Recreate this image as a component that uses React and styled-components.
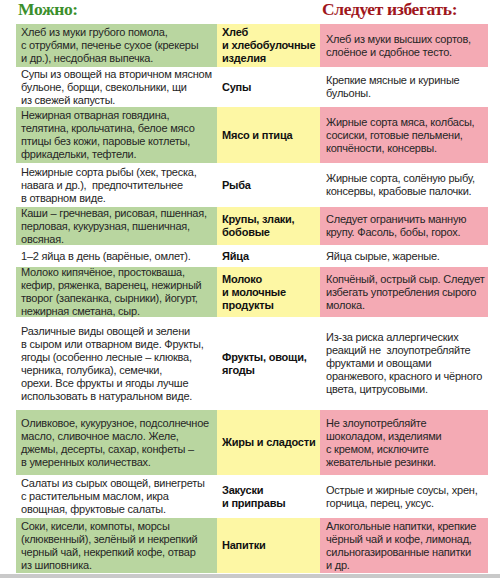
import React from 'react';
import styled, { createGlobalStyle } from 'styled-components';

const GlobalStyle = createGlobalStyle`
    html, body {
        margin: 0;
        padding: 0;
        background: #ffffff;
    }
    body {
        font-family: "Liberation Sans", Arial, sans-serif;
        color: #1e1e1e;
    }
`;

const COLS = '201px 103px 168px';

const rows = [
    {
        h: 43, tint: true,
        ok: ['Хлеб из муки грубого помола,', 'с отрубями, печенье сухое (крекеры', 'и др.), несдобная выпечка.'],
        group: ['Хлеб', 'и хлебобулочные', 'изделия'],
        no: ['Хлеб из муки высших сортов,', 'слоёное и сдобное тесто.'],
    },
    {
        h: 40,
        ok: ['Супы из овощей на вторичном мясном', 'бульоне, борщи, свекольники, щи', 'из свежей капусты.'],
        group: ['Супы'],
        no: ['Крепкие мясные и куриные', 'бульоны.'],
    },
    {
        h: 56, tint: true,
        ok: ['Нежирная отварная говядина,', 'телятина, крольчатина, белое мясо', 'птицы без кожи, паровые котлеты,', 'фрикадельки, тефтели.'],
        group: ['Мясо и птица'],
        no: ['Жирные сорта мяса, колбасы,', 'сосиски, готовые пельмени,', 'копчёности, консервы.'],
    },
    {
        h: 44,
        ok: ['Нежирные сорта рыбы (хек, треска,', 'навага и др.),  предпочтительнее', 'в отварном виде.'],
        group: ['Рыба'],
        no: ['Жирные сорта, солёную рыбу,', 'консервы, крабовые палочки.'],
    },
    {
        h: 38, tint: true,
        ok: ['Каши – гречневая, рисовая, пшенная,', 'перловая, кукурузная, пшеничная,', 'овсяная.'],
        group: ['Крупы, злаки,', 'бобовые'],
        no: ['Следует ограничить манную', 'крупу. Фасоль, бобы, горох.'],
    },
    {
        h: 22,
        ok: ['1–2 яйца в день (варёные, омлет).'],
        group: ['Яйца'],
        no: ['Яйца сырые, жареные.'],
    },
    {
        h: 50, tint: true,
        ok: ['Молоко кипячёное, простокваша,', 'кефир, ряженка, варенец, нежирный', 'творог (запеканка, сырники), йогурт,', 'нежирная сметана, сыр.'],
        group: ['Молоко', 'и молочные', 'продукты'],
        no: ['Копчёный, острый сыр. Следует', 'избегать употребления сырого', 'молока.'],
    },
    {
        h: 93,
        ok: ['Различные виды овощей и зелени', 'в сыром или отварном виде. Фрукты,', 'ягоды (особенно лесные – клюква,', 'черника, голубика), семечки,', 'орехи. Все фрукты и ягоды лучше', 'использовать в натуральном виде.'],
        group: ['Фрукты, овощи,', 'ягоды'],
        no: ['Из-за риска аллергических', 'реакций не  злоупотребляйте', 'фруктами и овощами', 'оранжевого, красного и чёрного', 'цвета, цитрусовыми.'],
    },
    {
        h: 65, tint: true,
        ok: ['Оливковое, кукурузное, подсолнечное', 'масло, сливочное масло. Желе,', 'джемы, десерты, сахар, конфеты –', 'в умеренных количествах.'],
        group: ['Жиры и сладости'],
        no: ['Не злоупотребляйте', 'шоколадом, изделиями', 'с кремом, исключите', 'жевательные резинки.'],
    },
    {
        h: 43,
        ok: ['Салаты из сырых овощей, винегреты', 'с растительным маслом, икра', 'овощная, фруктовые салаты.'],
        group: ['Закуски', 'и приправы'],
        no: ['Острые и жирные соусы, хрен,', 'горчица, перец, уксус.'],
    },
    {
        h: 55, tint: true,
        ok: ['Соки, кисели, компоты, морсы', '(клюквенный), зелёный и некрепкий', 'черный чай, некрепкий кофе, отвар', 'из шиповника.'],
        group: ['Напитки'],
        no: ['Алкогольные напитки, крепкие', 'чёрный чай и кофе, лимонад,', 'сильногазированные напитки', 'и др.'],
    },
];

const Lines = ({ list }) => list.map((l, i) => <Line key={i}>{l}</Line>);

const App = () => {
    return (
        <Page>
            <GlobalStyle />
            <Header>
                <Title $tone="ok">Можно:</Title>
                <span />
                <Title $tone="no">Следует избегать:</Title>
            </Header>
            <Table>
                {rows.map((r, i) => (
                    <Row key={i} $h={r.h}>
                        <Cell $kind={r.tint ? 'ok' : 'plain'}><Lines list={r.ok} /></Cell>
                        <Cell $kind={r.tint ? 'group' : 'plain'} $bold><Lines list={r.group} /></Cell>
                        <Cell $kind={r.tint ? 'no' : 'plain'} $pad={6}><Lines list={r.no} /></Cell>
                    </Row>
                ))}
            </Table>
            <Bottom />
        </Page>
    );
};

const Page = styled.div`
    width: 500px;
    height: 578px;
    overflow: hidden;
    background: #ffffff;
`;

const Header = styled.div`
    display: grid;
    grid-template-columns: ${COLS};
    padding-left: 16px;
    height: 24px;
    align-items: start;
`;

const Title = styled.h1`
    margin: 0;
    padding-left: 2px;
    font-family: "Liberation Serif", "Times New Roman", serif;
    font-weight: bold;
    font-size: 17.5px;
    line-height: 19px;
    letter-spacing: -0.35px;
    white-space: nowrap;
    color: ${p => (p.$tone === 'ok' ? '#3b8f2c' : '#a0161c')};
`;

const Table = styled.div`
    display: flex;
    flex-direction: column;
    padding-left: 16px;
`;

const Row = styled.div`
    display: grid;
    grid-template-columns: ${COLS};
    height: ${p => p.$h}px;
`;

const tints = {
    ok: '#b9d6a0',
    group: '#fdf7a4',
    no: '#f4aab4',
    plain: 'transparent',
};

const Cell = styled.div`
    display: flex;
    flex-direction: column;
    justify-content: center;
    padding-left: ${p => p.$pad || 5}px;
    background: ${p => tints[p.$kind]};
    font-size: 11px;
    line-height: 13px;
    letter-spacing: -0.22px;
    font-weight: ${p => (p.$bold ? 'bold' : 'normal')};
    color: ${p => (p.$bold ? '#111' : '#262626')};
    overflow: hidden;
`;

const Line = styled.div`
    white-space: pre;
`;

const Bottom = styled.div`
    margin-top: 1px;
    height: 4px;
    background: #c9c9c9;
`;

export default App;
